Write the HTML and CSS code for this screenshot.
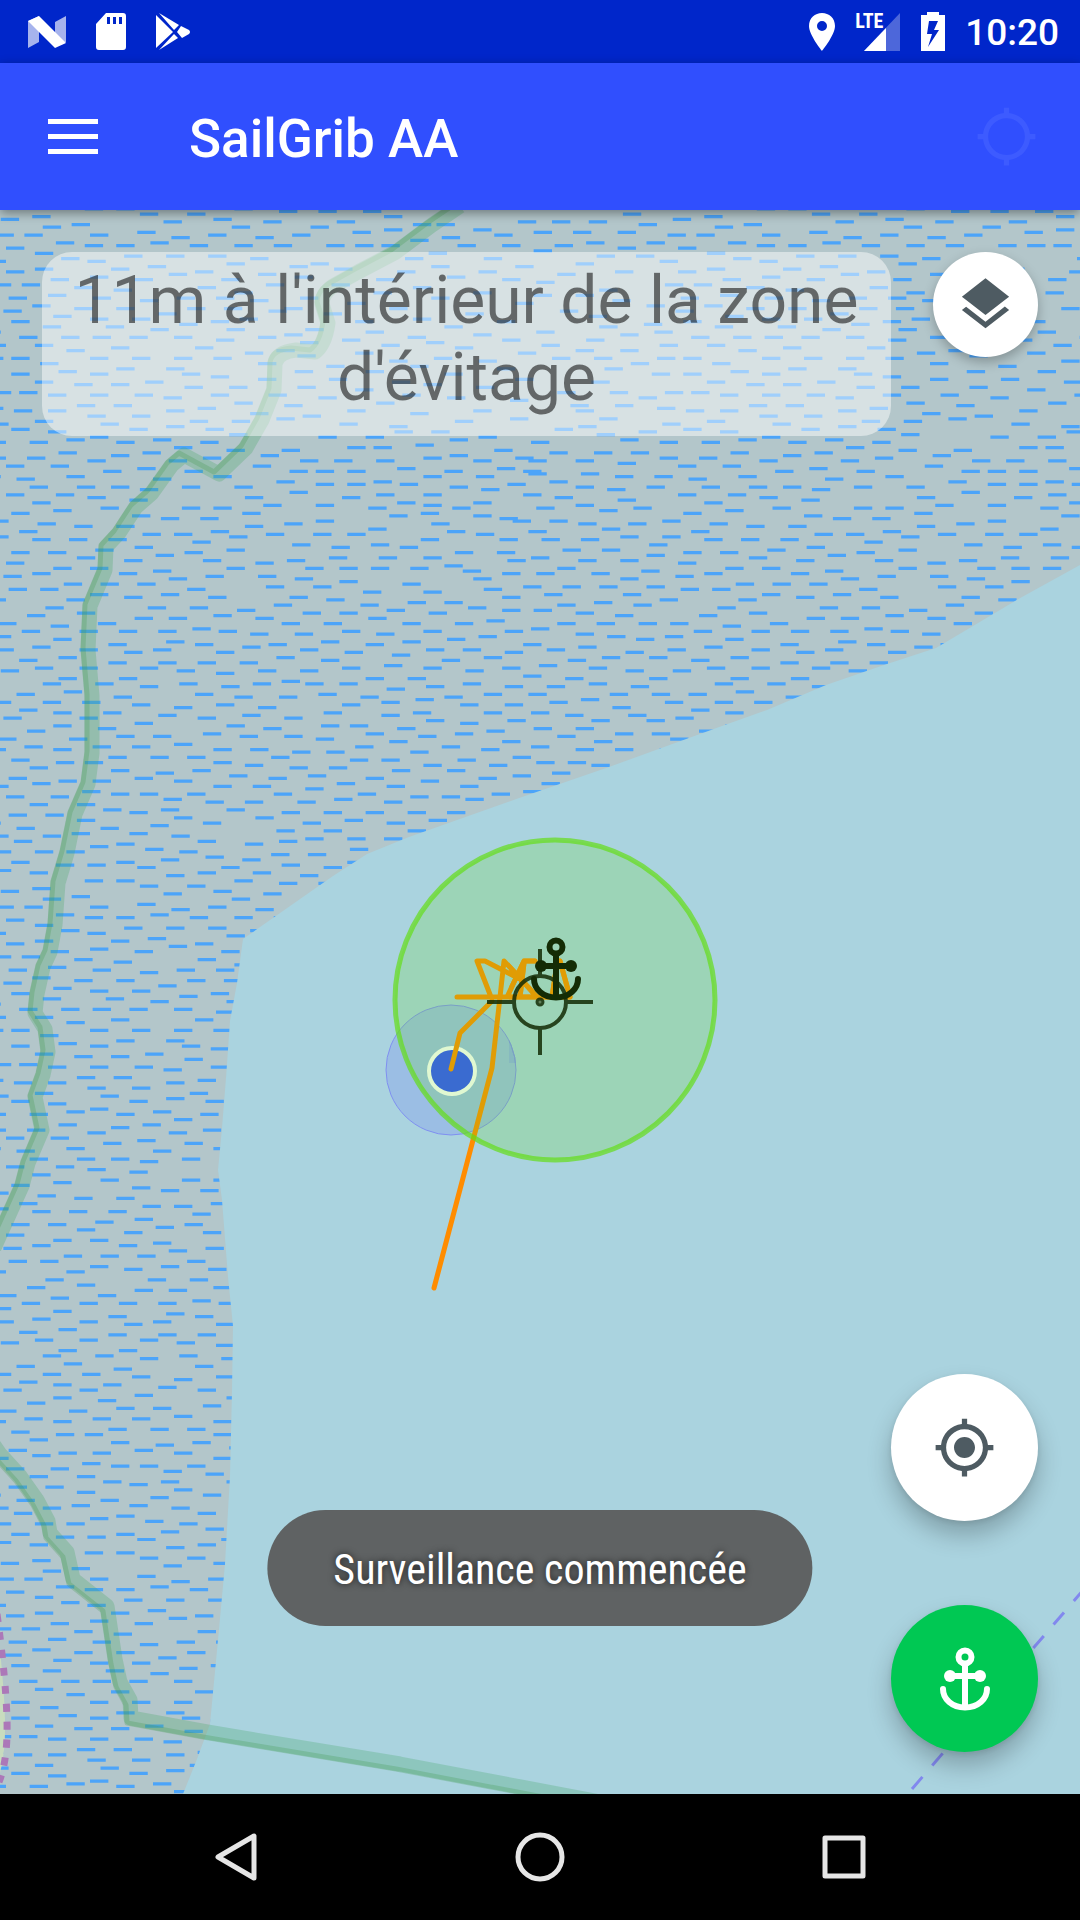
FILE: index.html
```html
<!DOCTYPE html>
<html lang="fr">
<head>
    <meta charset="UTF-8">
    <meta name="viewport" content="width=device-width, initial-scale=1.0">
    <title>SailGrib AA</title>
    <link rel="stylesheet" href="styles.css">
</head>
<body>

<div class="status-bar">
    <div class="status-left">
        <svg width="40" height="38" viewBox="0 0 40 38">
            <path d="M1 8l11-5v26L1 35zM28 9l11-6v26l-11 5z" fill="#fff" opacity=".65"/>
            <path d="M1 8l11-5 27 27-11 5z" fill="#fff"/>
        </svg>
        <svg width="32" height="38" viewBox="0 0 32 38">
            <path d="M11 0h17a3 3 0 0 1 3 3v31a3 3 0 0 1-3 3H4a3 3 0 0 1-3-3V11zM12 4v7h3V4zm6 0v7h3V4zm6 0v7h3V4z" fill="#fff" fill-rule="evenodd"/>
        </svg>
        <svg width="36" height="40" viewBox="0 0 36 40">
            <path d="M1 3l17 17L1 36zM4 1l20 12-5 5zM4 38l15-16 4 4zM26 14l8 4q2 2 0 4l-7 4-5-6z" fill="#fff"/>
        </svg>
    </div>
    <div class="status-right">
        <svg width="26" height="38" viewBox="0 0 26 38">
            <path d="M13 0C6 0 0 5 0 13c0 9 13 25 13 25s13-16 13-25C26 5 20 0 13 0zm0 8a5 5 0 1 1 0 10 5 5 0 0 1 0-10z" fill="#fff" fill-rule="evenodd"/>
        </svg>
        <div class="network">
            <svg width="46" height="38" viewBox="0 0 46 38">
                <path d="M9 38L45 0v38z" fill="#fff" opacity=".3"/>
                <path d="M9 38l22-23v23z" fill="#fff"/>
            </svg>
            <span class="lte">LTE</span>
        </div>
        <svg width="24" height="39" viewBox="0 0 24 39">
            <path d="M6 0h12v3h6v36H0V3h6zM8 9L6 22h5L7 35l11-17h-5l4-9z" fill="#fff" fill-rule="evenodd"/>
        </svg>
        <time class="clock">10:20</time>
    </div>
</div>

<header class="app-bar">
    <button class="icon-button" aria-label="Menu">
        <svg width="50" height="36" viewBox="0 0 50 36">
            <path d="M0 0h50v5H0zM0 15h50v5H0zM0 30h50v5H0z" fill="#fff"/>
        </svg>
    </button>
    <h1>SailGrib AA</h1>
    <button class="icon-button locate-dim" aria-label="Position">
        <svg width="63" height="63" viewBox="0 0 24 24"><path d="M20.940 11c-.46-4.170-3.770-7.480-7.940-7.940V1h-2v2.060C6.830 3.520 3.520 6.830 3.060 11H1v2h2.060c.46 4.170 3.770 7.480 7.940 7.940V23h2v-2.060c4.170-.46 7.480-3.770 7.940-7.940H23v-2h-2.060zM12 19c-3.870 0-7-3.130-7-7s3.130-7 7-7 7 3.130 7 7-3.130 7-7 7z"/></svg>
    </button>
</header>

<main class="map">
    <svg class="map-canvas" viewBox="0 0 1080 1584" preserveAspectRatio="xMidYMid slice">
        <defs>
            <pattern id="marsh" width="256" height="256" patternUnits="userSpaceOnUse" patternTransform="translate(342 -13) scale(2.625)">
                <path id="dashes" class="dashes"/>
                <use href="#dashes" x="-256"/>
            </pattern>
            <symbol id="anchor" viewBox="0 0 52 64">
                <g fill="none" stroke="currentColor" stroke-width="6">
                    <circle cx="26" cy="10" r="6.5"/>
                    <path d="M26 16v44M11 29h30"/>
                    <path d="M4 42c0 10 9 18.500 22 18.500s22-8.500 22-18.500" stroke-linecap="round"/>
                </g>
                <circle cx="11" cy="29" r="6" fill="currentColor"/>
                <circle cx="41" cy="29" r="6" fill="currentColor"/>
            </symbol>
            <path id="reserve-north" d="M460-4L432 15 396 42 358 62 333 76Q322 84 322 94L328 113Q325 135 315 142L296 140Q277 142 275 154L274 180 262 210 246 238 219 264 184 245 172 255 152 283 136 297 119 323 106 337 105 360 90 396 88 440 92 486 92 543 88 574 75 604 67 643 58 673 55 715 50 742 43 757 37 784 35 803 45 819 48 842 43 865 35 887 42 920 28 953 22 976 -6 1038"/>
            <path id="reserve-south" d="M-10 1230L0 1244 20 1266 37 1290 48 1311 50 1323 67 1342 73 1369 107 1396 115 1449 120 1472 130 1490 131 1508 207 1522 400 1554 600 1592"/>
        </defs>

        <!-- land, marsh and water -->
        <rect class="land" x="-600" y="-600" width="2280" height="2784"/>
        <rect x="-600" y="-600" width="2280" height="2784" fill="url(#marsh)"/>
        <path class="water" d="M1680 20L1080 355 1022 387 936 438 884 455 826 475 767 500 722 516 609 557 522 587 409 627 367 644 333 666 243 729 237 773 230 811 226 868 222 918 218 960 222 990 228 1067 233 1116 232 1181 230 1266 225 1354 218 1430 210 1514 197 1549 183 1584 100 2184H1680z"/>

        <!-- nature reserve limits -->
        <g class="reserve">
            <use href="#reserve-north"/>
            <use href="#reserve-south"/>
        </g>
        <g class="reserve-edge">
            <use href="#reserve-north" x="-5" y="-2"/>
            <use href="#reserve-south" x="-4" y="5"/>
        </g>
        <path class="meadow" d="M-4 1405Q4 1470 5 1510T-4 1575z"/>
        <path class="footpath" d="M-3 1404Q6 1470 7 1510T-1 1572"/>
        <path class="border" d="M912 1579L1085 1378"/>

        <!-- boat position and track -->
        <circle class="accuracy" cx="451" cy="860" r="65"/>
        <circle class="boat" cx="452" cy="861" r="23"/>
        <path class="track" d="M434 1078L492 858 500 787 504 751 519 767 537 787M457 787H570M491 787L477 751H485L522 770M507 787L524 751H535M520 787L524 753M552 787L556 760M560 751L570 787M492 791L460 823 451 859"/>
        <g class="crosshair">
            <circle cx="540" cy="792" r="26"/>
            <circle class="crosshair-dot" cx="540" cy="792" r="3"/>
            <path d="M487 792h27M566 792h27M540 739v27M540 818v27"/>
        </g>
        <use href="#anchor" x="530" y="727" width="52" height="64"/>
        <circle class="swing-zone" cx="555" cy="790" r="160"/>
    </svg>

    <div class="map-top">
        <p class="banner">11m à l'intérieur de la zone d'évitage</p>
        <button class="fab fab-small" aria-label="Couches">
            <svg width="63" height="63" viewBox="0 0 24 24"><path d="M11.990 18.540l-7.370-5.730L3 14.070l9 7 9-7-1.630-1.270-7.380 5.740zM12 16l7.360-5.730L21 9l-9-7-9 7 1.630 1.270L12 16z"/></svg>
        </button>
    </div>

    <div class="map-actions">
        <button class="fab" aria-label="Ma position">
            <svg width="63" height="63" viewBox="0 0 24 24"><path d="M12 8c-2.210 0-4 1.790-4 4s1.790 4 4 4 4-1.790 4-4-1.790-4-4-4zm8.940 3c-.46-4.170-3.770-7.480-7.940-7.940V1h-2v2.060C6.830 3.520 3.520 6.830 3.060 11H1v2h2.060c.46 4.170 3.770 7.480 7.940 7.940V23h2v-2.060c4.170-.46 7.480-3.770 7.940-7.940H23v-2h-2.060zM12 19c-3.870 0-7-3.130-7-7s3.130-7 7-7 7 3.130 7 7-3.130 7-7 7z"/></svg>
        </button>
        <button class="fab fab-green" aria-label="Surveillance du mouillage">
            <svg width="52" height="64"><use href="#anchor" width="52" height="64"/></svg>
        </button>
    </div>

    <div class="toast" role="status">Surveillance commencée</div>
</main>

<nav class="nav-bar">
    <button aria-label="Retour">
        <svg width="50" height="50" viewBox="0 0 50 50"><path d="M43 4v42L7 25z"/></svg>
    </button>
    <button aria-label="Accueil">
        <svg width="50" height="50" viewBox="0 0 50 50"><circle cx="25" cy="25" r="22"/></svg>
    </button>
    <button aria-label="Applications">
        <svg width="50" height="50" viewBox="0 0 50 50"><rect x="6" y="6" width="38" height="38"/></svg>
    </button>
</nav>

<script src="marsh.js"></script>
</body>
</html>
```
FILE: styles.css
```css
* {
    box-sizing: border-box;
}
body {
    margin: 0;
    min-height: 100vh;
    display: flex;
    flex-direction: column;
    font-family: Roboto, sans-serif;
    background: #000;
}
button {
    padding: 0;
    border: none;
    background: none;
    cursor: pointer;
}
svg {
    display: block;
}

/* status bar */
.status-bar {
    height: 63px;
    padding: 0 21px 0 27px;
    display: flex;
    justify-content: space-between;
    align-items: center;
    background: #0026ca;
    color: #fff;
}
.status-left {
    display: flex;
    align-items: center;
    gap: 28px;
}
.status-right {
    display: flex;
    align-items: center;
    gap: 20px;
}
.network {
    position: relative;
}
.lte {
    position: absolute;
    left: 0;
    top: 0;
    font-family: "Roboto Condensed", Roboto, sans-serif;
    font-size: 20px;
    line-height: 16px;
    font-weight: 700;
}
.clock {
    padding-top: 3px;
    font-size: 37px;
    line-height: 44px;
    font-weight: 500;
}

/* app bar */
.app-bar {
    position: relative;
    z-index: 1;
    height: 147px;
    padding: 0 42px 0 48px;
    display: flex;
    align-items: center;
    background: #304ffe;
    box-shadow: 0 3px 10px rgba(0, 0, 0, 0.4);
}
.app-bar h1 {
    flex: 1;
    margin: 0 0 0 91px;
    padding-top: 4px;
    color: #fff;
    font-size: 53px;
    line-height: 62px;
    font-weight: 500;
}
.locate-dim {
    fill: #3d5bff;
}

/* map */
.map {
    position: relative;
    flex: 1;
    padding: 42px;
    display: flex;
    flex-direction: column;
    justify-content: space-between;
    gap: 42px;
    overflow: hidden;
}
.map-canvas {
    position: absolute;
    left: 0;
    top: 0;
    width: 100%;
    height: 100%;
}
.land {
    fill: #b3c6ca;
}
.water {
    fill: #aad3df;
}
.dashes {
    stroke: #4ca4f9;
    stroke-width: 1.2;
}
.reserve {
    fill: none;
    stroke: #46a564;
    stroke-width: 15;
    stroke-linejoin: round;
    opacity: 0.28;
}
.reserve-edge {
    fill: none;
    stroke: #3c9646;
    stroke-width: 5;
    stroke-linejoin: round;
    opacity: 0.25;
}
.meadow {
    fill: #c8dcbe;
}
.footpath {
    fill: none;
    stroke: #ac78b8;
    stroke-width: 7;
    stroke-dasharray: 8 10;
}
.border {
    fill: none;
    stroke: #8288ee;
    stroke-width: 3;
    stroke-dasharray: 16 15;
}
.accuracy {
    fill: rgba(95, 110, 250, 0.2);
    stroke: #7f8ff0;
}
.boat {
    fill: #304ffe;
    stroke: #fff;
    stroke-width: 4;
}
.track {
    fill: none;
    stroke: #ff8c00;
    stroke-width: 5;
    stroke-linecap: round;
    stroke-linejoin: round;
}
.crosshair {
    fill: none;
    stroke: #000;
    stroke-width: 4;
    opacity: 0.86;
}
.crosshair-dot {
    fill: #555;
    stroke-width: 3;
}
.swing-zone {
    fill: #64dd17;
    fill-opacity: 0.2;
    stroke: #64dd17;
    stroke-opacity: 0.7;
    stroke-width: 5;
}
.map-top {
    position: relative;
    display: flex;
    align-items: flex-start;
    gap: 42px;
}
.banner {
    flex: 1;
    margin: 0;
    padding: 10px 30px 20px;
    border-radius: 30px;
    background: rgba(255, 255, 255, 0.47);
    color: rgba(0, 0, 0, 0.54);
    font-size: 66px;
    line-height: 77px;
    text-align: center;
}
.fab {
    width: 147px;
    height: 147px;
    display: flex;
    align-items: center;
    justify-content: center;
    border-radius: 50%;
    background: #fff;
    fill: #4e5b62;
    box-shadow: 0 14px 24px rgba(0, 0, 0, 0.24), 0 2px 6px rgba(0, 0, 0, 0.1);
}
.fab-small {
    width: 105px;
    height: 105px;
    box-shadow: 0 5px 12px rgba(0, 0, 0, 0.26);
}
.fab-green {
    background: #00c853;
    color: #fff;
}
.map-actions {
    position: relative;
    align-self: flex-end;
    display: flex;
    flex-direction: column;
    gap: 84px;
}
.toast {
    position: absolute;
    left: 50%;
    bottom: 168px;
    transform: translateX(-50%);
    padding: 38px 66px 34px;
    border-radius: 58px;
    background: #5f6263;
    color: #fff;
    font-family: "Roboto Condensed", Roboto, sans-serif;
    font-size: 42px;
    line-height: 44px;
    white-space: nowrap;
    text-shadow: 0 0 7px rgba(0, 0, 0, 0.7);
}

/* navigation bar */
.nav-bar {
    height: 126px;
    display: flex;
    justify-content: center;
    background: #000;
}
.nav-bar button {
    flex: 0 1 304px;
    display: flex;
    align-items: center;
    justify-content: center;
}
.nav-bar svg {
    fill: none;
    stroke: #e6e6e6;
    stroke-width: 5;
    stroke-linejoin: round;
}
```
FILE: marsh.js
```js
// marsh symbol tile, 256 x 256: each row is [y, x, x, ...], one dash for each x
const rows = [
    [0,123],[1,137,201,222],[2,189,240],[4,158,170,215],[5,8,232,247],[6,107,179,197],[7,16,138],[8,126,207],
    [9,67,80,94,188,226,254],[10,27,36,113,153],[11,142,214,244],[12,16,50],[13,4,73,88,105,178],
    [14,58,124,135,160,205,237],[15,38,191,223],[16,26],[17,93,116,147,183],
    [18,5,15,44,61,81,158,170,198,215,230,250],[19,105,128],[20,73],[21,33,139],[22,97,112,173,189,205],
    [23,24,54,149,221],[24,121,159],[25,89,212,244],[26,34,66,182,236],[27,139,168,253],[28,21,52,104,128,200],
    [29,82,190,224],[30,40,160,238],[31,13,61,145,177,210],[32,74],[33,123,134,227,252],[34,27,154,201],
    [35,98,169],[36,12,50,215],[37,73,89,144],[38,34,129,161,193,208,240],[39,103,179,221],[40,2,66],
    [41,116,138],[42,18,154,170,197,211,234],[43,83,127,228],[44,47,186,249],[45,94,146],[46,27,160,176,217],
    [47,5,59,130,206],[48,115,194],[49,39,98,142,166],[50,183,212,242],[51,9,74,119],[52,50,106,234],
    [53,25,133,149,161,175,192,224],[54,0,61,93,208],[55,32,240],[56,15,76,121,139],[57,43,168,200],
    [58,89,106,151,231],[59,5,67,219],[60,239],[61,35,80,96,120,130,160,176,192,207],[62,18,52],
    [63,110,141,224],[64,26,250],[65,59,100,170,189],[66,9,148,238],[67,39,118,130,160,195],[68,206],
    [69,66,224,251],[70,19,95,139,181],[71,31,154,168],[72,51,196,213,239],[73,5],[74,82,102,123,133],
    [75,23,144,160,177,206,228],[76,40,113,188,247],[77,64],[78,13,215],[79,87,104,155,169,234],[80,120,201],
    [81,2,50,89,131,144,189],[82,26,221],[83,159,176,241],[84,64,98,231],[85,43,139,198,214],[86,122,164,255],
    [87,18,90,189],[88,81,130,175,204],[89,20,34,113,144],[90,97,213],[91,9,52,160,247],[92,41,106,151,184],
    [93,72,121,137,170,202],[94,28],[95,2,12,192],[96,58,212,233],[97,79,96,110,148,180],[98,41,168,225],
    [99,31,66,121,136,203],[100,13,50,71,89,159,190,240,253],[101,105],[102,128,145,222],[103,21,59,178],
    [104,2,39,69,165,196,236,246],[105,71,91],[106,31,51,104,119,151,207],[107,132,184],[108,12,79,231],
    [109,2,22,63,246],[110,41,89,116,137,155,168,195,215],[111,53,101,179],[112,236],[113,13,31,69,128,147],
    [114,0,81,159,219],[115,105,175],[116,21,50,138],[117,31,89,226,246],[118,10,42,74,111,164,195,207],
    [119,98,146],[120,30,130,218],[121,18,50,176],[122,60,187,202],[123,65,79,122,246],[124,34,90,109,140,234],
    [125,154,170,219],[126,10,99],[127,40,71,133,206],[128,2,51,180,192,227,245],[129,106,122,213],
    [130,30,60,76,91,138,152,167],[131,199],[132,11,117,237],[133,22,177,252],[134,84,99,162,212],
    [135,43,59,130,144,196],[136,116,185],[137,14,31,72,155,251],[138,63,90,106,173,203,235],[139,128,223],
    [140,39],[141,11,26,82,146,160,212,242,255],[142,46,114,184],[143,61,74,95,138,171],[144,127,204,224],
    [145,50,106,190,238],[146,255],[147,23,150,164,178],[148,69,84,98,116,227,245],[149,54,129,141,197],
    [150,8,31],[151,77,107,160,187],[152,61,173,205,236],[153,121,151,250],[154,25,39,96],[155,7,82,111,230],
    [156,48,143,182,198],[157,17,61,73,216],[158,33,89,155,241,255],[159,104,136,207],[160,10,177,190,223],
    [161,55],[162,23,43,82,97,113,125,163,233,249],[163,145],[164,72,199],[165,0,31,62,134,156,171,186,209],
    [166,13,89,221,238],[167,52,101,123],[168,40,112,146],[169,23,189,248],[170,9,69,167,200,228],
    [171,90,138,218],[172,32,46,78,124,156,184,240],[173,1,62,108,173,208],[174,19],[175,54,99,117,148,231],
    [176,38,86,133,248],[177,167,186,201,217],[178,16,75],[179,0,31,61,94,139,156,179],
    [180,47,108,126,193,224,240],[181,208],[182,69],[183,9,25,85,117,148,171],[184,233],
    [185,46,94,142,162,194,222,242,255],[186,32,62,78,110,179,210],[187,17],[188,150],
    [189,54,71,102,118,132,200,247],[190,7,39,169,215,232],[191,28,91],[192,15,79,123,142,157],
    [193,0,45,62,176,208],[194,103,192,224],[195,133],[196,27,54,72,146,165,249],[197,15,85,109,186,218],
    [198,127,156,201,234],[199,32,63,95,116],[200,45,177],[201,3,146,212,248],[202,21,73,89,163,226],
    [203,55,136],[204,9,43,104,118,203],[205,29,82,170,184,217,234],[206,125,152,246],[207,18,61,96],
    [208,192],[209,5,38,72,135,161,176],[210,53,89,104,121,146,207,221],[211,26,237,250],
    [213,65,167,183,197,229],[214,3,15,44,130],[215,74,86,147,158,207],[216,31,56,95,219],[217,137,236,251],
    [218,19,40,168,199],[219,80,185],[220,65,213,243],[221,9,52,129,177,228],[222,30,148,161,192],
    [223,76,138,254],[224,17,45,122,207,222],[225,242],[226,69,157],[227,6,57,168,179,197,230],
    [228,26,38,128,145],[229,47,188,253],[230,16,204,219,239],[231,137,155],[233,165,187,212],
    [234,9,25,40,175,233,249],[235,129,143],[236,192,223],[237,1,33,155],[238,17,119,203,241],[239,183],
    [240,132,164],[241,25,231,249],[242,153,175],[243,122,142,191],[244,2,16,242],[245,131,201,232],
    [246,170,219],[247,160],[248,3,181],[249,123,139,151,194],[250,229,243],[251,204],[252,187,218],
    [253,2,130,170],[254,147,159,233],[255,178,210,249]
];

let d = '';
for (const [y, ...xs] of rows) {
    for (const x of xs) {
        d += `M${x} ${y + 0.5}h7`;
    }
}
document.getElementById('dashes').setAttribute('d', d);
```
